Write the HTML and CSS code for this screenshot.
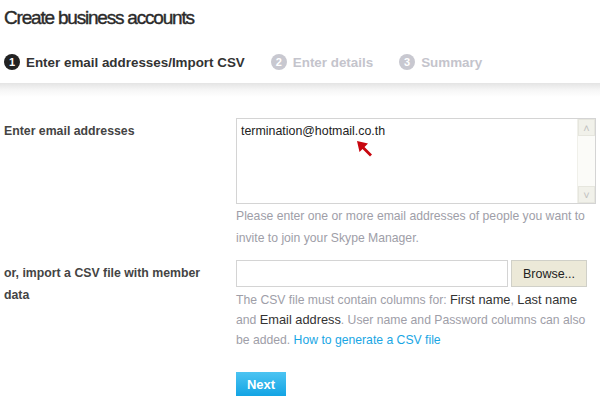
FILE: index.html
```html
<!DOCTYPE html>
<html>
<head>
    <title>Create business accounts</title>
    <link rel="stylesheet" href="styles.css">
</head>
<body>
    <div id="page">
        <h1>Create business accounts</h1>

        <ol class="steps">
            <li class="step current"><span class="num">1</span>Enter email addresses/Import CSV</li>
            <li class="step"><span class="num">2</span>Enter details</li>
            <li class="step"><span class="num">3</span>Summary</li>
        </ol>
    </div>

    <div class="band"></div>

    <div id="form">
        <div class="row">
            <label class="label" for="emails">Enter email addresses</label>
            <div class="field">
                <div class="textarea" id="emails">
                    <div class="textarea-text">termination@hotmail.co.th</div>
                    <div class="scrollbar">
                        <span class="sb-btn">&#x2c4;</span>
                        <span class="sb-track"></span>
                        <span class="sb-btn">&#x2c5;</span>
                    </div>
                    <svg class="pointer" width="18" height="18" viewBox="0 0 18 18">
                        <polygon points="1,1 12,3.5 8.5,7 16,14.5 14,16.5 6.5,9 3.5,12" fill="#c8070f"/>
                    </svg>
                </div>
                <p class="help">Please enter one or more email addresses of people you want to invite to join your Skype Manager.</p>
            </div>
        </div>

        <div class="row">
            <label class="label" for="csv">or, import a CSV file with member data</label>
            <div class="field">
                <div class="file">
                    <input type="text" id="csv" class="file-name">
                    <button class="browse">Browse...</button>
                </div>
                <p class="help csv-help">The CSV file must contain columns for: <span class="col">First name</span>, <span class="col">Last name</span> and <span class="col">Email address</span>. User name and Password columns can also be added. <a href="#">How to generate a CSV file</a></p>
            </div>
        </div>

        <div class="row">
            <div class="label"></div>
            <div class="field">
                <button class="next">Next</button>
            </div>
        </div>
    </div>
</body>
</html>
```

FILE: styles.css
```css
body {
    font-family: "Liberation Sans", Arial, sans-serif;
    margin: 0;
    padding: 0;
    background-color: #fff;
    color: #333;
}
#page {
    padding: 0 4px;
}
h1 {
    font-size: 19px;
    font-weight: normal;
    color: #2a2a2a;
    margin: 0;
    padding-top: 6px;
    line-height: 24px;
    letter-spacing: -1.2px;
    -webkit-text-stroke: 0.4px #2a2a2a;
}
.steps {
    list-style: none;
    margin: 0;
    padding: 0;
    display: flex;
    height: 28px;
    margin-top: 18px;
    align-items: center;
}
.step {
    display: flex;
    align-items: center;
    font-size: 13.4px;
    font-weight: bold;
    color: #c4c4cc;
    margin-right: 26px;
}
.step .num {
    width: 16px;
    height: 16px;
    border-radius: 50%;
    background-color: #c8c8d0;
    color: #fff;
    font-size: 11px;
    line-height: 16px;
    text-align: center;
    margin-right: 6px;
}
.step.current {
    color: #333;
}
.step.current .num {
    background-color: #222;
}
.band {
    height: 14px;
    margin-top: 7px;
    background: linear-gradient(#e4e4e4, #f6f6f6 50%, #fff);
}
#form {
    padding: 21px 4px 0 4px;
}
.row {
    display: flex;
    margin-bottom: 11px;
}
.label {
    width: 232px;
    font-size: 12.3px;
    font-weight: bold;
    color: #444;
    line-height: 22px;
    padding-right: 20px;
    padding-top: 2px;
    box-sizing: border-box;
}
.field {
    width: 360px;
}
.textarea {
    position: relative;
    display: flex;
    height: 86px;
    border: 1px solid #d4d4d4;
    box-sizing: border-box;
    background-color: #fff;
}
.textarea-text {
    flex: 1;
    font-size: 12.4px;
    color: #222;
    padding: 4px 4px;
    line-height: 16px;
}
.scrollbar {
    width: 17px;
    display: flex;
    flex-direction: column;
    background-color: #fbfbf8;
    border-left: 1px solid #f0f0ea;
}
.sb-btn {
    height: 17px;
    background-color: #f1f1ea;
    border: 1px solid #e6e6de;
    box-sizing: border-box;
    color: #c0c0c0;
    font-size: 11px;
    line-height: 17px;
    text-align: center;
}
.sb-track {
    flex: 1;
}
.pointer {
    position: absolute;
    left: 119px;
    top: 21px;
}
.help {
    font-size: 12.2px;
    color: #9e9ea8;
    line-height: 22px;
    margin: 1px 0 0 0;
}
.file {
    display: flex;
    height: 27px;
}
.file-name {
    width: 272px;
    height: 27px;
    border: 1px solid #d4d4d4;
    box-sizing: border-box;
    margin: 0;
}
.browse {
    width: 76px;
    height: 27px;
    margin-left: 3px;
    background-color: #ece9d8;
    border: 1px solid #d0d0c8;
    font-family: "Liberation Sans", Arial, sans-serif;
    font-size: 12.5px;
    color: #222;
}
.csv-help {
    line-height: 20px;
    margin-top: 3px;
}
.col {
    color: #333;
    font-size: 12.8px;
}
.help a {
    color: #19a6e4;
    text-decoration: none;
}
.next {
    margin-top: 11px;
    width: 50px;
    height: 24px;
    border: none;
    background: linear-gradient(#4cc4f2, #13a4e4);
    color: #fff;
    font-family: "Liberation Sans", Arial, sans-serif;
    font-size: 13px;
    font-weight: bold;
    padding: 0;
}
```
